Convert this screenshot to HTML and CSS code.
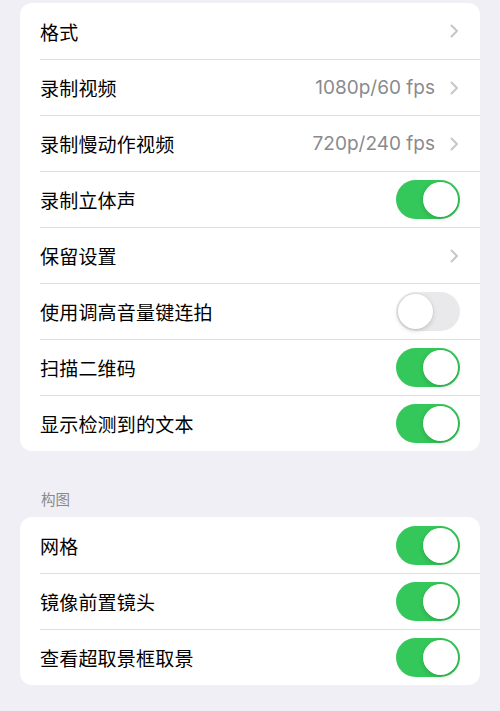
FILE: index.html
```html
<!DOCTYPE html>
<html lang="zh-CN">
<head>
    <meta charset="UTF-8">
    <meta name="viewport" content="width=device-width, initial-scale=1.0">
    <title>相机</title>
    <link rel="stylesheet" href="styles.css">
</head>
<body>
    <div class="card">
        <div class="row">
            <span class="label">格式</span>
            <span class="chevron"><svg width="9" height="14" viewBox="0 0 9 14"><path d="M1.5 1.5 L7 7 L1.5 12.5" /></svg></span>
        </div>
        <div class="row">
            <span class="label">录制视频</span>
            <span class="value">1080p/60 fps</span>
            <span class="chevron"><svg width="9" height="14" viewBox="0 0 9 14"><path d="M1.5 1.5 L7 7 L1.5 12.5" /></svg></span>
        </div>
        <div class="row">
            <span class="label">录制慢动作视频</span>
            <span class="value">720p/240 fps</span>
            <span class="chevron"><svg width="9" height="14" viewBox="0 0 9 14"><path d="M1.5 1.5 L7 7 L1.5 12.5" /></svg></span>
        </div>
        <div class="row">
            <span class="label">录制立体声</span>
            <span class="toggle on"><span class="knob"></span></span>
        </div>
        <div class="row">
            <span class="label">保留设置</span>
            <span class="chevron"><svg width="9" height="14" viewBox="0 0 9 14"><path d="M1.5 1.5 L7 7 L1.5 12.5" /></svg></span>
        </div>
        <div class="row">
            <span class="label">使用调高音量键连拍</span>
            <span class="toggle"><span class="knob"></span></span>
        </div>
        <div class="row">
            <span class="label">扫描二维码</span>
            <span class="toggle on"><span class="knob"></span></span>
        </div>
        <div class="row">
            <span class="label">显示检测到的文本</span>
            <span class="toggle on"><span class="knob"></span></span>
        </div>
    </div>

    <div class="section-title">构图</div>
    <div class="card">
        <div class="row">
            <span class="label">网格</span>
            <span class="toggle on"><span class="knob"></span></span>
        </div>
        <div class="row">
            <span class="label">镜像前置镜头</span>
            <span class="toggle on"><span class="knob"></span></span>
        </div>
        <div class="row">
            <span class="label">查看超取景框取景</span>
            <span class="toggle on"><span class="knob"></span></span>
        </div>
    </div>
</body>
</html>
```

FILE: styles.css
```css
body {
    margin: 0;
    padding: 3px 20px 0;
    background: #f0eff5;
    font-family: Inter, "Noto Sans CJK SC", sans-serif;
    color: #000;
}
.card {
    background: #fff;
    border-radius: 12px;
    overflow: hidden;
}
.row {
    display: flex;
    align-items: center;
    box-sizing: border-box;
    height: 56px;
    margin-left: 20px;
    padding-right: 21px;
    border-top: 1px solid #dedee1;
}
.row:first-child {
    border-top: none;
}
.label {
    flex: 1;
    font-size: 19px;
    letter-spacing: 0.2px;
}
.value {
    font-size: 19px;
    color: #8a8a8e;
    margin-right: 15px;
}
.chevron svg {
    display: block;
}
.chevron path {
    fill: none;
    stroke: #c4c4c8;
    stroke-width: 1.8;
    stroke-linecap: round;
    stroke-linejoin: round;
}
.toggle {
    position: relative;
    width: 64px;
    height: 39px;
    margin-right: -1px;
    border-radius: 20px;
    background: #e9e9eb;
}
.toggle.on {
    background: #34c759;
}
.knob {
    position: absolute;
    top: 2px;
    left: 2px;
    width: 35px;
    height: 35px;
    border-radius: 50%;
    background: #fff;
    box-shadow: 0 2px 5px rgba(0, 0, 0, 0.15), 0 0 0 0.5px rgba(0, 0, 0, 0.06);
}
.toggle.on .knob {
    left: 27px;
}
.section-title {
    margin: 39px 0 7px 21px;
    font-size: 14.5px;
    line-height: 20px;
    color: #8a8a8e;
}
```
